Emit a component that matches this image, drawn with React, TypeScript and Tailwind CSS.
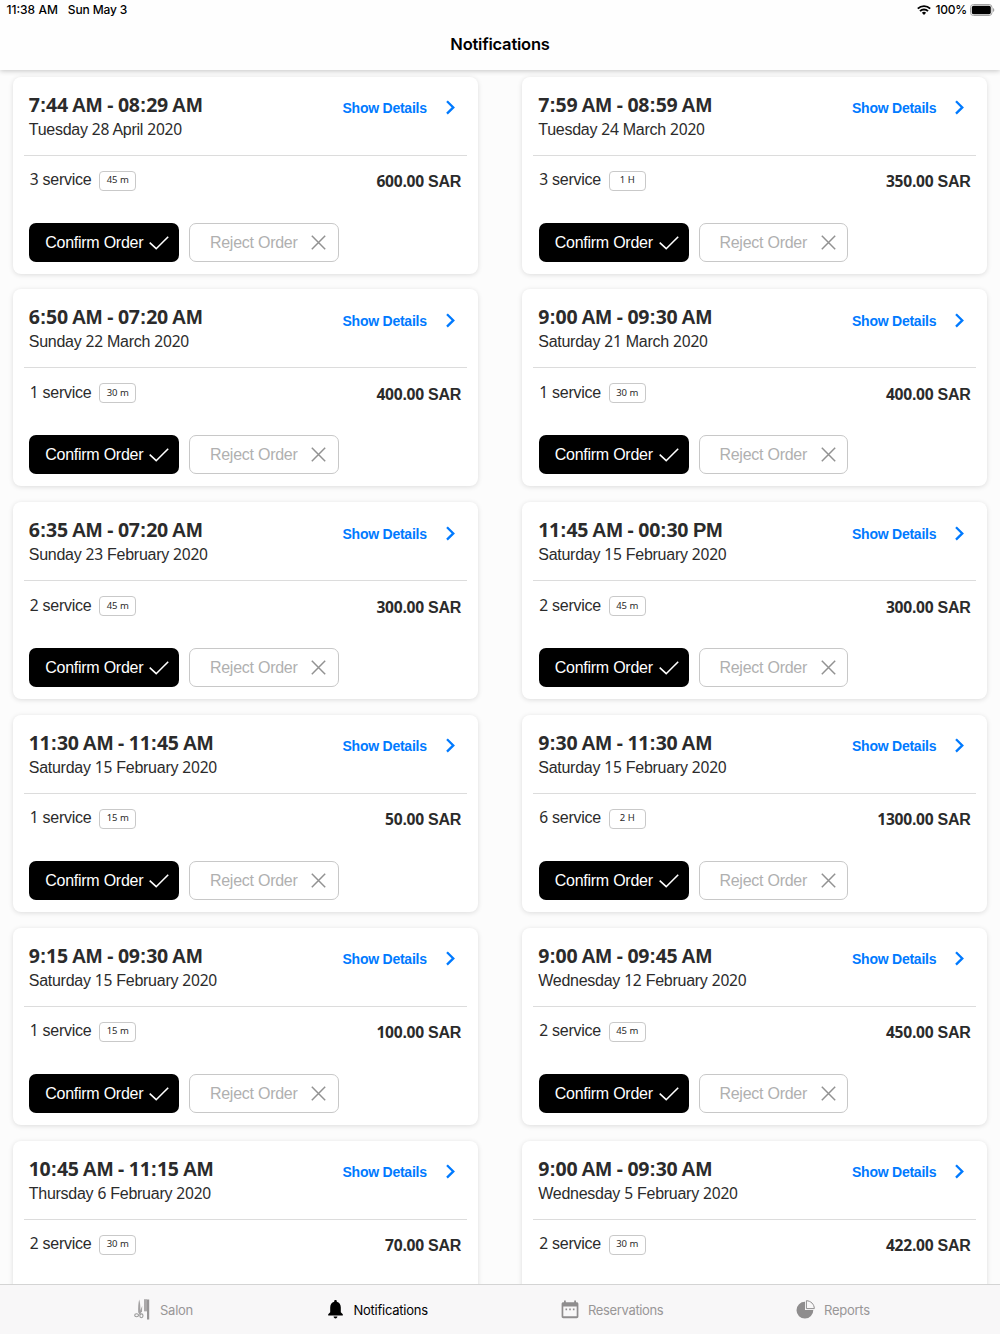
import React from "react";

type Order = { time: string; date: string; count: number; duration: string; price: string };

const orders: Order[] = [
  { time: "7:44 AM - 08:29 AM", date: "Tuesday 28 April 2020", count: 3, duration: "45 m", price: "600.00 SAR" },
  { time: "7:59 AM - 08:59 AM", date: "Tuesday 24 March 2020", count: 3, duration: "1 H", price: "350.00 SAR" },
  { time: "6:50 AM - 07:20 AM", date: "Sunday 22 March 2020", count: 1, duration: "30 m", price: "400.00 SAR" },
  { time: "9:00 AM - 09:30 AM", date: "Saturday 21 March 2020", count: 1, duration: "30 m", price: "400.00 SAR" },
  { time: "6:35 AM - 07:20 AM", date: "Sunday 23 February 2020", count: 2, duration: "45 m", price: "300.00 SAR" },
  { time: "11:45 AM - 00:30 PM", date: "Saturday 15 February 2020", count: 2, duration: "45 m", price: "300.00 SAR" },
  { time: "11:30 AM - 11:45 AM", date: "Saturday 15 February 2020", count: 1, duration: "15 m", price: "50.00 SAR" },
  { time: "9:30 AM - 11:30 AM", date: "Saturday 15 February 2020", count: 6, duration: "2 H", price: "1300.00 SAR" },
  { time: "9:15 AM - 09:30 AM", date: "Saturday 15 February 2020", count: 1, duration: "15 m", price: "100.00 SAR" },
  { time: "9:00 AM - 09:45 AM", date: "Wednesday 12 February 2020", count: 2, duration: "45 m", price: "450.00 SAR" },
  { time: "10:45 AM - 11:15 AM", date: "Thursday 6 February 2020", count: 2, duration: "30 m", price: "70.00 SAR" },
  { time: "9:00 AM - 09:30 AM", date: "Wednesday 5 February 2020", count: 2, duration: "30 m", price: "422.00 SAR" },
];

/* Digits are set in a humanist face, everything else in a grotesque. */
function Mixed({ text }: { text: string }) {
  return (
    <>
      {text.split(/(\d+)/).map((part, i) =>
        /\d/.test(part) ? (
          <span key={i} className="font-['Noto_Sans',sans-serif] text-[0.975em]">{part}</span>
        ) : (
          part
        )
      )}
    </>
  );
}

function OrderCard({ order, actions }: { order: Order; actions: boolean }) {
  return (
    <article className="flex h-[197px] flex-col rounded-[8px] bg-white px-[11px] text-[#2b2b2b] shadow-[0_1px_5px_rgba(0,0,0,0.13)]">
      <div className="flex h-[79px] shrink-0 justify-between border-b border-[#dcdcdc] pl-[5px] pr-[11px]">
        <div className="flex flex-col pt-[15px]">
          <h2 className="h-[26px] whitespace-nowrap text-[20px] leading-[25px] font-bold tracking-[-0.28px] [word-spacing:-0.6px]"><Mixed text={order.time} /></h2>
          <p className="h-[22px] whitespace-nowrap text-[16px] leading-[22px] tracking-[-0.27px]"><Mixed text={order.date} /></p>
        </div>
        <a className="flex h-[20px] pt-[20.4px] text-[14px] leading-[22px] font-bold tracking-[-0.24px] text-[#007aff]">
          Show Details
          <svg className="mt-[3px] ml-[18px] h-[15px] w-[11px]" viewBox="0 0 11 15" fill="none" stroke="currentColor" strokeWidth="2.3">
            <path d="M2 1.2 8.3 7.4 2 13.6" />
          </svg>
        </a>
      </div>
      <div className="flex h-[67px] shrink-0 items-start justify-between pt-[14px] pl-[6px] pr-[6px]">
        <div className="flex items-start">
          <span className="mt-[-0.6px] w-[61.5px] whitespace-nowrap text-[16px] leading-[20px] tracking-[-0.27px]"><Mixed text={`${order.count} service`} /></span>
          <span className="mt-[1px] ml-[8px] flex h-[20px] w-[37px] items-center justify-center rounded-[4px] border border-[#c9c9c9] pb-[1px] font-['Noto_Sans',sans-serif] text-[9.5px] leading-[14px]">{order.duration}</span>
        </div>
        <span className="mt-[1.4px] mr-[-0.3px] text-[16px] leading-[20px] font-bold tracking-[-0.27px]"><Mixed text={order.price} /></span>
      </div>
      {actions && (
        <div className="flex gap-[10px] pl-[5.5px]">
          <button className="flex h-[39px] w-[150px] items-center rounded-[7px] bg-black pt-[1px] pl-[15.5px] text-[16px] tracking-[-0.25px] text-white">
            <span className="w-[99px] whitespace-nowrap">Confirm Order</span>
            <svg className="ml-[5.5px] h-[14px] w-[20px] shrink-0" viewBox="0 0 20 14" fill="none" stroke="currentColor" strokeWidth="1.6">
              <path d="M.7 6.7 7.2 12.7 19.2.8" />
            </svg>
          </button>
          <button className="flex h-[39px] w-[149.5px] items-center rounded-[7px] border-[1.5px] border-[#c8c8c8] bg-white pt-[1px] pl-[19.5px] text-[16px] tracking-[-0.25px] text-[#b0b0b0]">
            <span className="w-[88px] whitespace-nowrap">Reject Order</span>
            <svg className="mb-[1px] ml-[13.5px] h-[15px] w-[15px] shrink-0" viewBox="0 0 15 15" fill="none" stroke="#929292" strokeWidth="1.5">
              <path d="M.8.8 14.2 14.2M14.2.8.8 14.2" />
            </svg>
          </button>
        </div>
      )}
    </article>
  );
}

function SalonIcon() {
  return (
    <svg className="mb-[3px] h-[21px] w-[16px] shrink-0" viewBox="0 0 16 21" fill="none">
      <path d="M5.2.5C4.2 4 4 9 4.2 13.5L6.6 16 6.4 10C6.4 6 6 3 5.2.5Z" fill="#a3a1a2" />
      <path d="M8.2 7 8 12.5 4.6 16.2 5.5 13Z" fill="#a3a1a2" />
      <ellipse cx="2.6" cy="16.2" rx="1.9" ry="1.5" stroke="#999" strokeWidth="1.1" />
      <ellipse cx="7.4" cy="16.8" rx="1.6" ry="1.9" stroke="#999" strokeWidth="1.1" />
      <path d="M13 .5h2.2v20H13Z" fill="#969495" />
      <path d="M10 .5h3v11.9h-3Z" fill="#b3b1b2" />
      <path d="M10 1h3M10 3h3M10 5h3M10 7h3M10 9h3M10 11h3" stroke="#a3a1a2" strokeWidth="1" />
    </svg>
  );
}

function BellIcon() {
  return (
    <svg className="mb-[2px] h-[19px] w-[15px] shrink-0" viewBox="0 0 15 19" fill="currentColor">
      <path d="M7.5 0c.8 0 1.3.5 1.3 1.3v.5c2.6.7 4 2.8 4 5.7v4.7l2 2.1v1.2H.2v-1.2l2-2.1V7.5c0-2.9 1.4-5 4-5.7v-.5C6.2.5 6.7 0 7.5 0ZM5.6 16.6h3.8c0 1.1-.8 1.9-1.9 1.9s-1.9-.8-1.9-1.9Z" />
    </svg>
  );
}

function CalendarIcon() {
  return (
    <svg className="mb-[2px] h-[19px] w-[18px] shrink-0" viewBox="0 0 18 19" fill="#8f8d8e">
      <path fillRule="evenodd" d="M3 .5h1.8v1.7h8.4V.5H15v1.7h.7c1 0 1.7.7 1.7 1.7v12.6c0 1-.7 1.7-1.7 1.7H2.3c-1 0-1.7-.7-1.7-1.7V3.9c0-1 .7-1.7 1.7-1.7H3V.5ZM2.3 6.5v9.8h13.4V6.5H2.3Z" />
      <path d="M4.5 8.6h1.6v1.6H4.5ZM8.2 8.6h1.6v1.6H8.2ZM11.9 8.6h1.6v1.6h-1.6Z" />
    </svg>
  );
}

function PieIcon() {
  return (
    <svg className="mb-[2px] h-[19px] w-[19px] shrink-0" viewBox="0 0 19 19">
      <path d="M9 1.8v8.2h8.3A8.4 8.4 0 1 1 9 1.8Z" fill="#8f8d8e" />
      <path d="M10.4.7v7.9h7.9C18.3 4.3 14.8.8 10.4.7Z" fill="#f8f7f8" stroke="#8f8d8e" strokeWidth="1" />
    </svg>
  );
}

export default function App() {
  return (
    <div className="flex h-[1334px] w-[1000px] flex-col overflow-hidden bg-[#fcfcfc] font-['Liberation_Sans',Arial,sans-serif]">
      <header className="relative z-10 h-[70px] shrink-0 bg-[#fefefe] font-['Inter',sans-serif] shadow-[0_1px_5px_rgba(0,0,0,0.22)]">
        <div className="flex h-[20px] items-center justify-between pr-[5px] pl-[6.5px] text-[12px] font-medium">
          <div className="flex gap-[10px]"><span>11:38 AM</span><span className="tracking-[-0.15px]">Sun May 3</span></div>
          <div className="flex items-center">
            <svg className="mr-[4px] h-[10px] w-[14px]" viewBox="0 0 14 10" fill="none" stroke="black" strokeWidth="1.9">
              <path d="M.8 3.7a8.8 8.8 0 0 1 12.4 0M3 6.2a5.6 5.6 0 0 1 8 0" />
              <path d="M4.9 7.8a3 3 0 0 1 4.2 0L7 10Z" fill="black" stroke="none" />
            </svg>
            <span className="tracking-[-0.2px]">100%</span>
            <svg className="ml-[3px] h-[12px] w-[25px]" viewBox="0 0 25 12">
              <rect x=".5" y=".5" width="21.5" height="11" rx="3" fill="white" stroke="#a2a2a2" />
              <rect x="1.8" y="1.8" width="19" height="8.4" rx="1.7" />
              <path d="M23 4v4c1.8-.6 1.8-3.4 0-4" fill="#a2a2a2" />
            </svg>
          </div>
        </div>
        <h1 className="h-[50px] text-center text-[16.5px] leading-[48px] font-semibold tracking-[-0.22px]">Notifications</h1>
      </header>
      <main className="grid min-h-0 flex-1 auto-rows-[197px] grid-cols-[465px_465px] justify-center gap-x-[44.5px] gap-y-[15.8px] overflow-hidden pt-[6.6px]">
        {orders.map((order, i) => <OrderCard key={i} order={order} actions={i < 10} />)}
      </main>
      <nav className="relative z-10 flex h-[50px] shrink-0 items-center border-t border-[#d4d4d4] bg-[#f8f7f8] pt-[2px] pl-[134px] font-['Inter',sans-serif] text-[13px] tracking-[-0.25px] text-[#989697]">
        <div className="flex w-[194px] items-center gap-[10px]"><SalonIcon /><span>Salon</span></div>
        <div className="flex w-[233px] items-center gap-[10.5px] text-black"><BellIcon /><span>Notifications</span></div>
        <div className="flex w-[235px] items-center gap-[9px] tracking-[-0.35px]"><CalendarIcon /><span>Reservations</span></div>
        <div className="flex items-center gap-[9px]"><PieIcon /><span>Reports</span></div>
      </nav>
    </div>
  );
}
